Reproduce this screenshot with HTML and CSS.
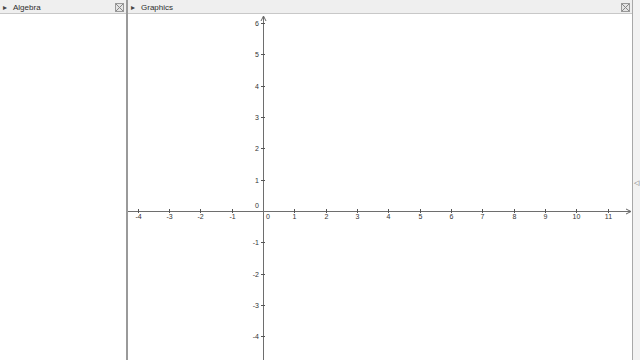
FILE: index.html
```html
<!DOCTYPE html>
<html lang="en">
<head>
  <meta charset="UTF-8" />
  <title>Graphics</title>
  <link rel="stylesheet" href="styles.css">
</head>
<body>
  <div class="app">
    <div class="panel algebra">
      <div class="bar">
        <span class="toggle">&#9656;</span>
        <span class="title">Algebra</span>
        <span class="close"></span>
      </div>
      <div class="body"></div>
    </div>
    <div class="panel graphics">
      <div class="bar">
        <span class="toggle">&#9656;</span>
        <span class="title">Graphics</span>
        <span class="close"></span>
      </div>
      <div class="body">
        <svg id="plot" width="504" height="346" viewBox="0 0 504 346"></svg>
      </div>
    </div>
    <div class="edge"><span class="grip">&#9665;</span></div>
  </div>

  <script>
    // origin and unit of the coordinate system, in panel pixels
    const ox = 135, oy = 197, unit = 31.33;
    const svg = document.getElementById('plot');
    const ns = 'http://www.w3.org/2000/svg';

    function add(tag, attrs, text) {
      const el = document.createElementNS(ns, tag);
      for (const k in attrs) el.setAttribute(k, attrs[k]);
      if (text !== undefined) el.textContent = text;
      svg.appendChild(el);
      return el;
    }

    // axes
    add('line', { x1: 0, y1: oy + 0.5, x2: 502, y2: oy + 0.5, class: 'axis' });
    add('line', { x1: ox + 0.5, y1: 3, x2: ox + 0.5, y2: 346, class: 'axis' });
    add('path', { d: `M498 ${oy - 2} L503 ${oy + 0.5} L498 ${oy + 3}`, class: 'arrow' });
    add('path', { d: `M${ox - 2} 7 L${ox + 0.5} 2 L${ox + 3} 7`, class: 'arrow' });

    for (let i = -4; i <= 11; i++) {
      if (i === 0) continue;
      const x = Math.round(ox + i * unit) + 0.5;
      add('line', { x1: x, y1: oy - 2, x2: x, y2: oy + 2, class: 'tick' });
      add('text', { x: x, y: oy + 8, 'text-anchor': 'middle', class: 'num' }, i < 0 ? '-' + -i : i);
    }

    for (let j = -4; j <= 6; j++) {
      if (j === 0) continue;
      const y = Math.round(oy - j * unit) + 0.5;
      add('line', { x1: ox - 2, y1: y, x2: ox + 2, y2: y, class: 'tick' });
      add('text', { x: ox - 4, y: y + 2.5, 'text-anchor': 'end', class: 'num' }, j < 0 ? '-' + -j : j);
    }

    add('text', { x: ox - 4, y: oy - 3, 'text-anchor': 'end', class: 'num' }, '0');
    add('text', { x: ox + 3, y: oy + 8, class: 'num' }, '0');
  </script>
</body>
</html>
```

FILE: styles.css
```css
body {
  margin: 0;
  font-family: 'Liberation Sans', Arial, sans-serif;
  background: #ffffff;
  color: #333;
}

.app {
  display: flex;
  height: 360px;
  width: 640px;
  overflow: hidden;
}

.panel {
  display: flex;
  flex-direction: column;
}

.algebra {
  width: 126px;
  border-right: 2px solid #9a9a9a;
}

.graphics {
  width: 504px;
  border-right: 1px solid #a8a8a8;
}

.bar {
  height: 14px;
  display: flex;
  align-items: center;
  background: #efefef;
  border-bottom: 1px solid #c8c8c8;
  font-size: 8px;
  padding-top: 1px;
  box-sizing: border-box;
}

.toggle {
  width: 10px;
  padding-left: 3px;
  font-size: 8px;
  color: #444;
}

.title {
  flex: 1;
  color: #2e2e2e;
}

.close {
  width: 7px;
  height: 7px;
  margin-right: 2px;
  border: 1px solid #999;
  background:
    linear-gradient(45deg, transparent 45%, #888 45%, #888 55%, transparent 55%),
    linear-gradient(-45deg, transparent 45%, #888 45%, #888 55%, transparent 55%),
    #e4e4e4;
}

.body {
  flex: 1;
  background: #ffffff;
}

#plot {
  display: block;
}

.axis {
  stroke: #6e6e6e;
  stroke-width: 1;
}

.tick {
  stroke: #555;
  stroke-width: 1;
}

.arrow {
  fill: none;
  stroke: #666;
  stroke-width: 1;
}

.num {
  font-family: 'Liberation Sans', Arial, sans-serif;
  font-size: 7px;
  fill: #333;
}

.edge {
  flex: 1;
  background: #f2f2f2;
  display: flex;
  align-items: center;
  justify-content: center;
  padding-top: 6px;
}

.grip {
  font-size: 7px;
  color: #666;
}
```
